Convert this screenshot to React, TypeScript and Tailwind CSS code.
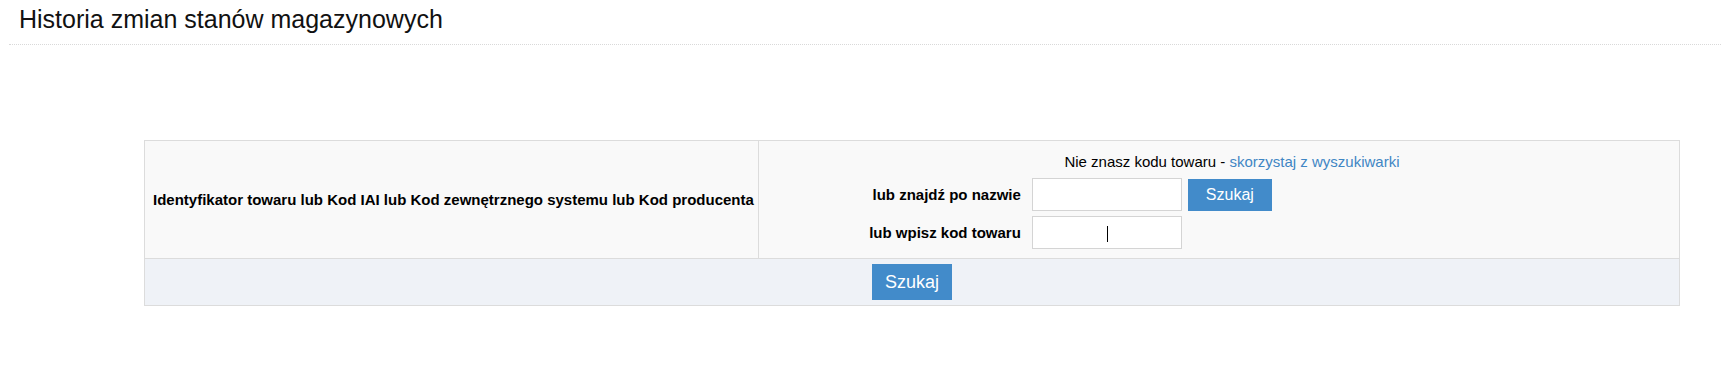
import React from 'react';

export default function StockHistory() {
  return (
    <main className="min-h-screen bg-white text-black" style={{ fontFamily: '"Liberation Sans", Arial, sans-serif' }}>
      <header className="ml-[9px] pt-[4px] pb-[10px] border-b border-dotted border-[#d9d9d9]">
        <h1 className="pl-[10px] text-[25px] leading-[30px] font-normal text-[#111]">Historia zmian stanów magazynowych</h1>
      </header>

      <div className="mt-[95px] ml-[144px] w-[1536px] border border-[#dcdcdc]">
        <div className="flex bg-[#f9f9f9] border-b border-[#dcdcdc]">
          <div className="flex items-center pl-[8px] pr-[4px] border-r border-[#dcdcdc]">
            <span className="text-[15px] leading-[20px] font-bold whitespace-nowrap">
              Identyfikator towaru lub Kod IAI lub Kod zewnętrznego systemu lub Kod producenta
            </span>
          </div>

          <div className="flex-1 flex flex-col pt-[11px] pb-[9px]">
            <div className="pl-[26px] text-center text-[15px] leading-[20px]">
              Nie znasz kodu towaru - <a href="#" className="text-[#3f86c4]">skorzystaj z wyszukiwarki</a>
            </div>

            <div className="mt-[6px] flex items-center pl-[100px]">
              <label className="w-[162px] text-right text-[15px] leading-[20px] font-bold">lub znajdź po nazwie</label>
              <input type="text" className="ml-[11px] w-[150px] h-[33px] bg-white border border-[#d4d4d4] outline-none" />
              <button className="ml-[6px] w-[84px] h-[32px] bg-[#428bca] text-white text-[16px] leading-none">Szukaj</button>
            </div>

            <div className="mt-[5px] flex items-center pl-[100px]">
              <label className="w-[162px] text-right text-[15px] leading-[20px] font-bold">lub wpisz kod towaru</label>
              <div className="relative ml-[11px]">
                <input type="text" className="w-[150px] h-[33px] bg-white border border-[#d4d4d4] text-center outline-none" />
                <span className="absolute left-[75px] top-[10px] w-px h-[16px] bg-black" />
              </div>
            </div>
          </div>
        </div>

        <div className="flex justify-center bg-[#eff2f7] py-[5px]">
          <button className="w-[80px] h-[36px] bg-[#428bca] text-white text-[18px] leading-none">Szukaj</button>
        </div>
      </div>
    </main>
  );
}
